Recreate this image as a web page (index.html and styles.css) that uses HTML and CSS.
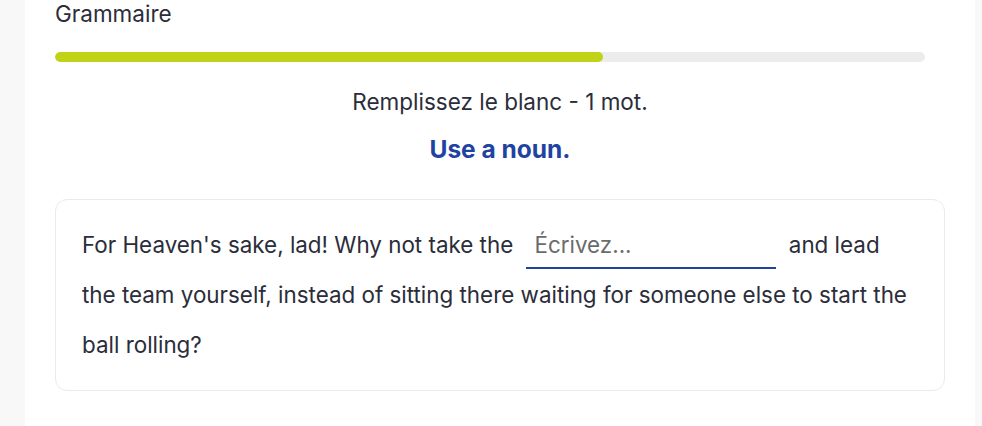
FILE: index.html
```html
<!DOCTYPE html>
<html lang="fr">
<head>
  <meta charset="UTF-8">
  <title>Grammaire</title>
  <link rel="stylesheet" href="styles.css">
</head>
<body>
  <div class="page">
    <div class="panel">
      <h2 class="section-title">Grammaire</h2>
      <div class="progress">
        <div class="progress-fill" style="width: 63%"></div>
      </div>

      <p class="instruction">Remplissez le blanc - 1 mot.</p>
      <p class="hint">Use a noun.</p>

      <div class="question-card">
        <p class="sentence">
          For Heaven's sake, lad! Why not take the
          <input type="text" class="blank" placeholder="Écrivez...">
          and lead the team yourself, instead of sitting there waiting for someone else to start the ball rolling?
        </p>
      </div>
    </div>
  </div>
</body>
</html>
```

FILE: styles.css
```css
body {
  margin: 0;
  font-family: Inter, 'Noto Sans', sans-serif;
  background: #f8f8f8;
  color: #2b2d3a;
}
.page {
  padding: 0 7px 0 25px;
}
.panel {
  background: #fff;
  min-height: 426px;
  padding: 0 30px 0 30px;
  box-sizing: border-box;
}
.section-title {
  margin: 0;
  padding-top: 0;
  font-size: 22.5px;
  font-weight: 400;
  line-height: 28px;
  color: #2b2d3a;
}
.progress {
  margin: 24px 20px 0 0;
  height: 10px;
  border-radius: 5px;
  background: #ececec;
  overflow: hidden;
}
.progress-fill {
  height: 100%;
  border-radius: 5px;
  background: #c0d317;
}
.instruction {
  margin: 26px 0 0;
  text-align: center;
  font-size: 22.5px;
  line-height: 28px;
}
.hint {
  margin: 18px 0 0;
  text-align: center;
  font-size: 24.5px;
  font-weight: 700;
  line-height: 30px;
  color: #1f43a0;
}
.question-card {
  margin-top: 35px;
  border: 1px solid #ebebeb;
  border-radius: 12px;
  padding: 20px 26px 20px;
}
.sentence {
  margin: 0;
  font-size: 22.4px;
  line-height: 50px;
}
.blank {
  width: 250px;
  margin: 0 7px 0 6px;
  padding: 0 9px 5px;
  border: none;
  border-bottom: 2px solid #1f43a0;
  font-family: inherit;
  font-size: 22.4px;
  line-height: 34px;
  height: 42px;
  color: #2b2d3a;
  box-sizing: border-box;
  outline: none;
}
.blank::placeholder {
  color: #6b6b6b;
}
```
